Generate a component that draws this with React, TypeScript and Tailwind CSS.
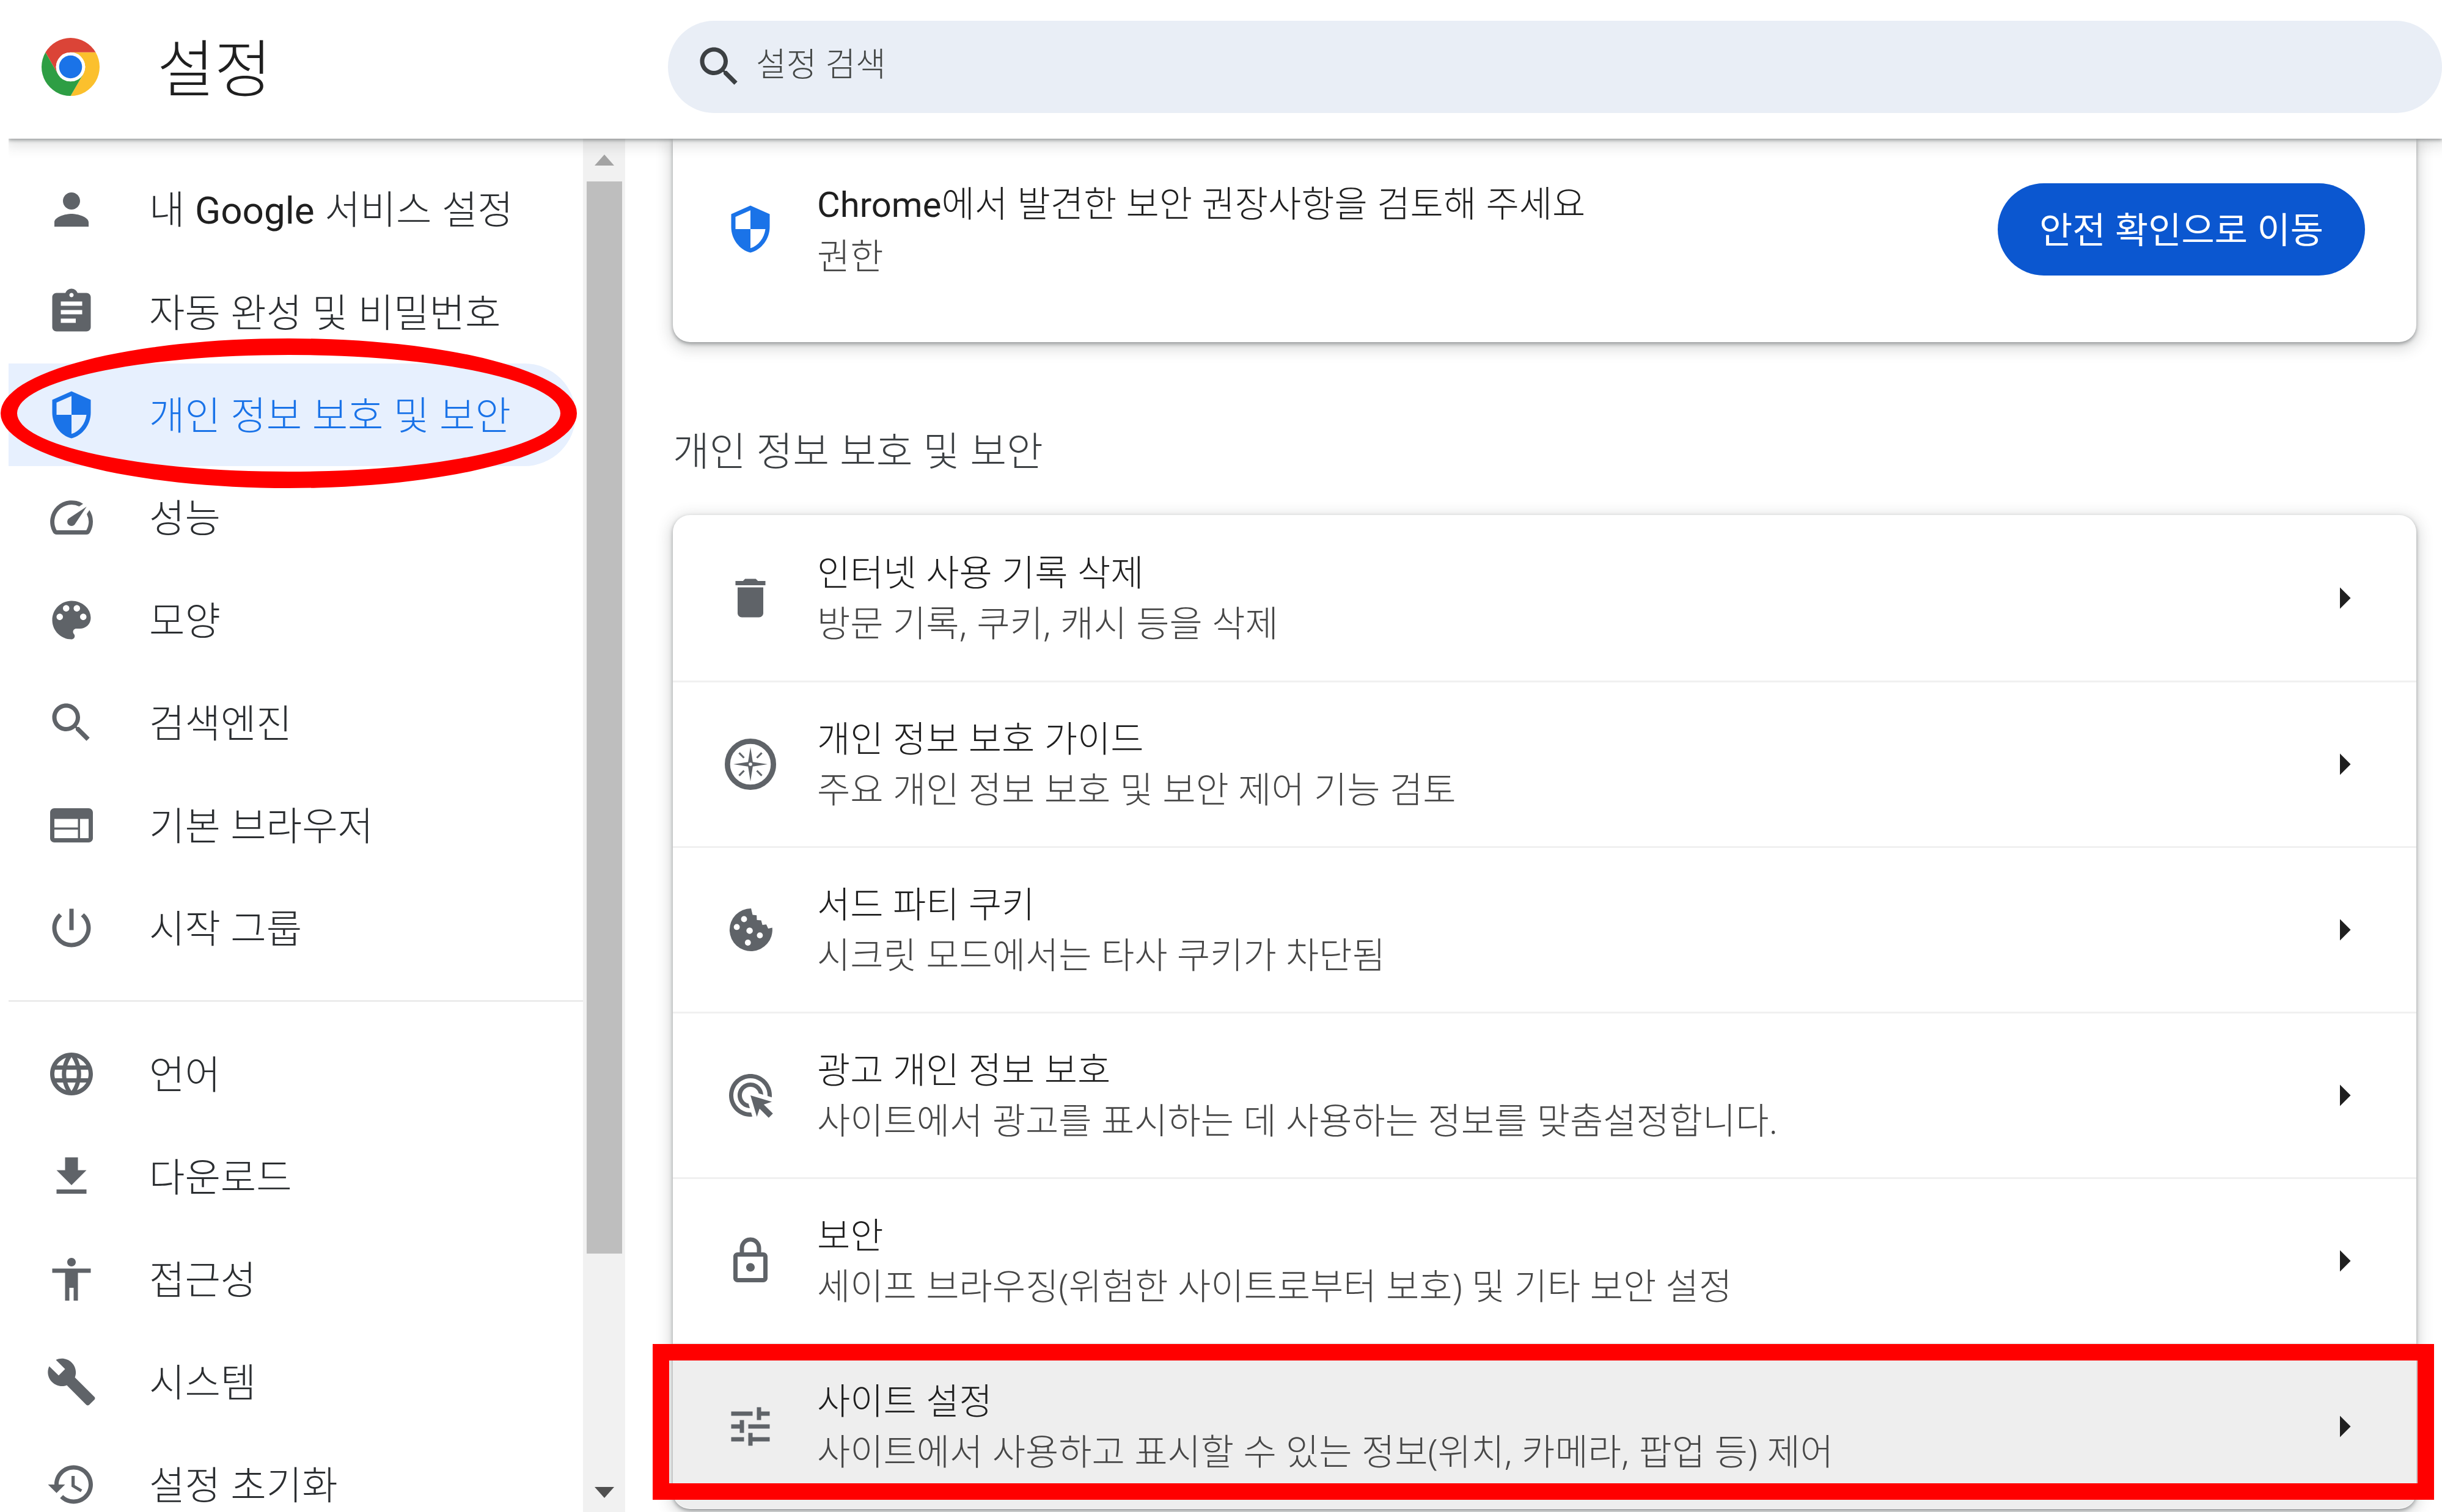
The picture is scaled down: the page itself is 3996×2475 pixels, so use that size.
import React from "react";

const P: Record<string, string> = {
  person: "M12 12c2.21 0 4-1.79 4-4s-1.79-4-4-4-4 1.79-4 4 1.79 4 4 4zm0 2c-2.67 0-8 1.34-8 4v2h16v-2c0-2.66-5.33-4-8-4z",
  assignment: "M19 3h-4.18C14.4 1.84 13.3 1 12 1c-1.3 0-2.4.84-2.82 2H5c-1.1 0-2 .9-2 2v14c0 1.1.9 2 2 2h14c1.1 0 2-.9 2-2V5c0-1.1-.9-2-2-2zm-7 0c.55 0 1 .45 1 1s-.45 1-1 1-1-.45-1-1 .45-1 1-1zm2 14H7v-2h7v2zm3-4H7v-2h10v2zm0-4H7V7h10v2z",
  security: "M12 1L3 5v6c0 5.55 3.84 10.74 9 12 5.16-1.26 9-6.45 9-12V5l-9-4zm0 10.99h7c-.53 4.12-3.28 7.79-7 8.94V12H5V6.3l7-3.11v8.8z",
  speed: "M20.38 8.57l-1.23 1.85a8 8 0 0 1-.22 7.58H5.07A8 8 0 0 1 15.58 6.85l1.85-1.23A10 10 0 0 0 3.35 19a2 2 0 0 0 1.72 1h13.85a2 2 0 0 0 1.74-1 10 10 0 0 0-.27-10.44zm-9.79 6.84a2 2 0 0 0 2.83 0l5.66-8.49-8.49 5.66a2 2 0 0 0 0 2.83z",
  palette: "M12 3c-4.97 0-9 4.03-9 9s4.03 9 9 9c.83 0 1.5-.67 1.5-1.5 0-.39-.15-.74-.39-1.01-.23-.26-.38-.61-.38-.99 0-.83.67-1.5 1.5-1.5H16c2.76 0 5-2.24 5-5 0-4.42-4.03-8-9-8zm-5.5 9c-.83 0-1.5-.67-1.5-1.5S5.67 9 6.5 9 8 9.67 8 10.5 7.33 12 6.5 12zm3-4C8.67 8 8 7.33 8 6.5S8.67 5 9.5 5s1.5.67 1.5 1.5S10.33 8 9.5 8zm5 0c-.83 0-1.5-.67-1.5-1.5S13.67 5 14.5 5s1.5.67 1.5 1.5S15.33 8 14.5 8zm3 4c-.83 0-1.5-.67-1.5-1.5S16.67 9 17.5 9s1.5.67 1.5 1.5-.67 1.5-1.5 1.5z",
  search: "M15.5 14h-.79l-.28-.27C15.41 12.59 16 11.11 16 9.5 16 5.91 13.09 3 9.5 3S3 5.91 3 9.5 5.91 16 9.5 16c1.61 0 3.09-.59 4.23-1.57l.27.28v.79l5 4.99L20.49 19l-4.99-5zm-6 0C7.01 14 5 11.99 5 9.5S7.01 5 9.5 5 14 7.01 14 9.5 11.99 14 9.5 14z",
  web: "M20 4H4c-1.1 0-1.99.9-1.99 2L2 18c0 1.1.9 2 2 2h16c1.1 0 2-.9 2-2V6c0-1.1-.9-2-2-2zm-5 14H4v-4h11v4zm0-5H4V9h11v4zm5 5h-4V9h4v9z",
  power: "M13 3h-2v10h2V3zm4.83 2.17l-1.42 1.42C17.99 7.86 19 9.81 19 12c0 3.87-3.13 7-7 7s-7-3.13-7-7c0-2.19 1.01-4.14 2.58-5.42L6.17 5.17C4.23 6.82 3 9.26 3 12c0 4.97 4.03 9 9 9s9-4.03 9-9c0-2.74-1.23-5.18-3.17-6.83z",
  language: "M11.99 2C6.47 2 2 6.48 2 12s4.47 10 9.99 10C17.52 22 22 17.52 22 12S17.52 2 11.99 2zm6.93 6h-2.95c-.32-1.25-.78-2.45-1.38-3.56 1.84.63 3.37 1.91 4.33 3.56zM12 4.04c.83 1.2 1.48 2.53 1.91 3.96h-3.82c.43-1.43 1.08-2.76 1.91-3.96zM4.26 14C4.1 13.36 4 12.69 4 12s.1-1.36.26-2h3.38c-.08.66-.14 1.32-.14 2 0 .68.06 1.34.14 2H4.26zm.82 2h2.95c.32 1.25.78 2.45 1.38 3.56-1.84-.63-3.37-1.9-4.33-3.56zm2.95-8H5.08c.96-1.66 2.49-2.93 4.33-3.56C8.81 5.55 8.35 6.75 8.03 8zM12 19.96c-.83-1.2-1.48-2.53-1.91-3.96h3.82c-.43 1.43-1.08 2.76-1.91 3.96zM14.34 14H9.66c-.09-.66-.16-1.32-.16-2 0-.68.07-1.35.16-2h4.68c.09.65.16 1.32.16 2 0 .68-.07 1.34-.16 2zm.25 5.56c.6-1.11 1.06-2.31 1.38-3.56h2.95c-.96 1.65-2.49 2.93-4.33 3.56zM16.36 14c.08-.66.14-1.32.14-2 0-.68-.06-1.34-.14-2h3.38c.16.64.26 1.31.26 2s-.1 1.36-.26 2h-3.38z",
  download: "M19 9h-4V3H9v6H5l7 7 7-7zM5 18v2h14v-2H5z",
  accessibility: "M12 2c1.1 0 2 .9 2 2s-.9 2-2 2-2-.9-2-2 .9-2 2-2zm9 7h-6v13h-2v-6h-2v6H9V9H3V7h18v2z",
  build: "M22.7 19l-9.1-9.1c.9-2.3.4-5-1.5-6.9-2-2-5-2.4-7.4-1.3L9 6 6 9 1.6 4.7C.4 7.1.9 10.1 2.9 12.1c1.9 1.9 4.6 2.4 6.9 1.5l9.1 9.1c.4.4 1 .4 1.4 0l2.3-2.3c.5-.4.5-1.1.1-1.4z",
  restore: "M13 3c-4.97 0-9 4.03-9 9H1l3.89 3.89.07.14L9 12H6c0-3.87 3.13-7 7-7s7 3.13 7 7-3.13 7-7 7c-1.93 0-3.68-.79-4.94-2.06l-1.42 1.42C8.27 19.99 10.51 21 13 21c4.97 0 9-4.03 9-9s-4.03-9-9-9zm-1 5v5l4.28 2.54.72-1.21-3.5-2.08V8H12z",
  delete: "M6 19c0 1.1.9 2 2 2h8c1.1 0 2-.9 2-2V7H6v12zM19 4h-3.5l-1-1h-5l-1 1H5v2h14V4z",
  ads: "M11.71 17.99C8.53 17.84 6 15.22 6 12c0-3.31 2.69-6 6-6 3.22 0 5.84 2.53 5.99 5.71l-2.1-.63C15.48 9.31 13.89 8 12 8c-2.21 0-4 1.79-4 4 0 1.89 1.31 3.48 3.08 3.89l.63 2.1zM22 12c0 .3-.01.6-.04.9l-1.97-.59c.01-.1.01-.21.01-.31 0-4.42-3.58-8-8-8s-8 3.58-8 8 3.58 8 8 8c.1 0 .21 0 .31-.01l.59 1.97c-.3.03-.6.04-.9.04-5.52 0-10-4.48-10-10S6.48 2 12 2s10 4.48 10 10zm-3.77 4.26L22 15l-10-3 3 10 1.26-3.77 4.27 4.27 1.98-1.98-4.28-4.26z",
  lock: "M18 8h-1V6c0-2.76-2.24-5-5-5S7 3.24 7 6v2H6c-1.1 0-2 .9-2 2v10c0 1.1.9 2 2 2h12c1.1 0 2-.9 2-2V10c0-1.1-.9-2-2-2zM9 6c0-1.66 1.34-3 3-3s3 1.34 3 3v2H9V6zm9 14H6V10h12v10zm-6-3c1.1 0 2-.9 2-2s-.9-2-2-2-2 .9-2 2 .9 2 2 2z",
  tune: "M3 17v2h6v-2H3zM3 5v2h10V5H3zm10 16v-2h8v-2h-8v-2h-2v6h2zM7 9v2H3v2h4v2h2V9H7zm14 4v-2H11v2h10zm-6-4h2V7h4V5h-4V3h-2v6z",
  arrow: "M10 17l5-5-5-5v10z",
};

function Icon({ name, className }: { name: string; className: string }) {
  return (
    <svg viewBox="0 0 24 24" className={`w-[84px] h-[84px] shrink-0 fill-current ${className}`}>
      {name === "compass" ? (
        <>
          <circle cx="12" cy="12" r="10.75" fill="none" stroke="currentColor" strokeWidth="2.5" />
          <path d="M12 4 13.1 10.9 20 12 13.1 13.1 12 20 10.9 13.1 4 12 10.9 10.9Z" />
          <circle cx="12" cy="12" r="0.8" fill="#fff" />
          <path d="M6.7 6.7 9 9M17.3 6.7 15 9M6.7 17.3 9 15M17.3 17.3 15 15" fill="none" stroke="currentColor" strokeWidth="0.9" />
        </>
      ) : name === "cookie" ? (
        <>
          <path d="M12.3 2 A10 10 0 1 0 22.2 11 L20.3 11.4 L19.4 9.5 L17.6 9.7 L17 7.6 L15 7.4 L14.9 5.2 L13 5 Z" />
          <circle cx="9" cy="7" r="1.4" fill="#fff" />
          <circle cx="5.6" cy="10.7" r="1.4" fill="#fff" />
          <circle cx="11.6" cy="12.4" r="1.5" fill="#fff" />
          <circle cx="16.4" cy="14.6" r="1.4" fill="#fff" />
          <circle cx="10.8" cy="18" r="1.4" fill="#fff" />
        </>
      ) : (
        <path d={P[name]} />
      )}
    </svg>
  );
}

function ChromeLogo() {
  return (
    <svg viewBox="0 0 48 48" className="w-[95px] h-[95px] shrink-0">
      <path fill="#db4437" d="M3.22 12A24 24 0 0 1 44.78 12H24A12 12 0 0 0 13.6 30Z" />
      <path fill="#fbc02d" d="M44.78 12A24 24 0 0 1 24 48L34.4 30A12 12 0 0 0 24 12Z" />
      <path fill="#2e9e44" d="M24 48A24 24 0 0 1 3.22 12L13.6 30A12 12 0 0 0 34.4 30Z" />
      <circle cx="24" cy="24" r="12" fill="#fff" />
      <circle cx="24" cy="24" r="9.5" fill="#1a73e8" />
    </svg>
  );
}

const navTop = [
  { i: "person", t: <>내 <span className="text-[62px] font-normal text-[#1f1f1f] [font-family:Roboto,sans-serif]">Google</span> 서비스 설정</> },
  { i: "assignment", t: "자동 완성 및 비밀번호" },
  { i: "security", t: "개인 정보 보호 및 보안", active: true },
  { i: "speed", t: "성능" },
  { i: "palette", t: "모양" },
  { i: "search", t: "검색엔진" },
  { i: "web", t: "기본 브라우저" },
  { i: "power", t: "시작 그룹" },
];
const navBottom = [
  { i: "language", t: "언어" },
  { i: "download", t: "다운로드" },
  { i: "accessibility", t: "접근성" },
  { i: "build", t: "시스템" },
  { i: "restore", t: "설정 초기화" },
];

function NavRow({ i, t, active }: { i: string; t: React.ReactNode; active?: boolean }) {
  return (
    <div className={`h-[168px] shrink-0 w-[928px] flex items-center pl-[61px] gap-[85px] rounded-r-full ${active ? "bg-[#e7f0fe]" : ""}`}>
      <Icon name={i} className={active ? "text-[#1a73e8]" : "text-[#5f6368]"} />
      <span className={`text-[63.5px] font-light leading-none whitespace-nowrap ${active ? "text-[#1a73e8]" : "text-[#2b2e31]"}`}>{t}</span>
    </div>
  );
}

const rows = [
  { i: "delete", t: "인터넷 사용 기록 삭제", s: "방문 기록, 쿠키, 캐시 등을 삭제" },
  { i: "compass", t: "개인 정보 보호 가이드", s: "주요 개인 정보 보호 및 보안 제어 기능 검토" },
  { i: "cookie", t: "서드 파티 쿠키", s: "시크릿 모드에서는 타사 쿠키가 차단됨" },
  { i: "ads", t: "광고 개인 정보 보호", s: "사이트에서 광고를 표시하는 데 사용하는 정보를 맞춤설정합니다." },
  { i: "lock", t: "보안", s: "세이프 브라우징(위험한 사이트로부터 보호) 및 기타 보안 설정" },
  { i: "tune", t: "사이트 설정", s: "사이트에서 사용하고 표시할 수 있는 정보(위치, 카메라, 팝업 등) 제어", hi: true },
];

const cardShadow = "shadow-[0_3px_6px_rgba(60,64,67,0.45),0_6px_22px_6px_rgba(60,64,67,0.18)]";

export default function App() {
  return (
    <div className="relative w-[3996px] h-[2475px] bg-white pl-[14px] overflow-hidden [font-family:'Noto_Sans','Noto_Sans_CJK_KR',sans-serif]">
      <div className="w-full h-full overflow-hidden flex flex-col">
        <header className="relative z-10 h-[227px] shrink-0 bg-white flex items-center pb-[9px] shadow-[0_3px_5px_rgba(60,64,67,0.4),0_8px_20px_4px_rgba(60,64,67,0.15)]">
          <div className="w-[1079px] shrink-0 pl-[54px] flex items-center gap-[94px]">
            <ChromeLogo />
            <span className="text-[102px] font-light leading-none text-[#1f1f1f] whitespace-nowrap translate-y-[2px]">설정</span>
          </div>
          <div className="flex-1 h-[151px] rounded-full bg-[#e9eef6] flex items-center pl-[42px] gap-[18px]">
            <Icon name="search" className="text-[#3c4043]" />
            <span className="text-[54px] font-light leading-none text-[#444746] whitespace-nowrap -translate-y-[5px]">설정 검색</span>
          </div>
        </header>

        <div className="flex-1 min-h-0 flex">
          <aside className="w-[940px] shrink-0 pt-[32px] flex flex-col overflow-hidden">
            {navTop.map((n, k) => (
              <NavRow key={k} {...n} />
            ))}
            <div className="h-[3px] shrink-0 my-[34px] bg-[#ececec]" />
            {navBottom.map((n, k) => (
              <NavRow key={k} {...n} />
            ))}
          </aside>

          <div className="w-[69px] shrink-0 bg-[#f1f1f1] flex flex-col items-center">
            <div className="h-[70px] shrink-0 flex items-center justify-center">
              <svg viewBox="0 0 32 18" className="w-[32px] h-[18px] fill-[#a3a3a3]"><path d="M16 0 32 18H0Z" /></svg>
            </div>
            <div className="w-[58px] h-[1755px] shrink-0 bg-[#bebebe]" />
            <div className="flex-1 flex items-end justify-center pb-[23px]">
              <svg viewBox="0 0 32 18" className="w-[32px] h-[18px] fill-[#505050]"><path d="M0 0H32L16 18Z" /></svg>
            </div>
          </div>

          <main className="flex-1 min-w-0 overflow-hidden pl-[78px] pr-[42px]">
            <section className={`h-[333px] bg-white rounded-b-[28px] flex items-center pb-[37px] pl-[85px] pr-[84px] ${cardShadow}`}>
              <Icon name="security" className="text-[#1a73e8]" />
              <div className="ml-[67px] flex-1 min-w-0 text-[59px] font-light leading-[83px] whitespace-nowrap">
                <div className="text-[#1f1f1f]"><span className="text-[58px] font-normal [font-family:Roboto,sans-serif]">Chrome</span>에서 발견한 보안 권장사항을 검토해 주세요</div>
                <div className="text-[#474747]">권한</div>
              </div>
              <div className="w-[601px] h-[151px] rounded-full bg-[#0b57d0] text-white text-[59px] leading-none flex items-center justify-center whitespace-nowrap">안전 확인으로 이동</div>
            </section>

            <h2 className="h-[283px] pt-[72px] flex items-center text-[65px] font-light leading-none text-[#3c4043] whitespace-nowrap">개인 정보 보호 및 보안</h2>

            <section className={`h-[1627px] bg-white rounded-[28px] flex flex-col ${cardShadow}`}>
              {rows.map((r, k) => (
                <div key={k} className={`h-[271px] shrink-0 flex items-center pl-[85px] pr-[76px] ${k > 0 ? "border-t-[3px] border-[#f0f0f0]" : ""} ${r.hi ? "bg-[#eeeeee] rounded-b-[28px]" : ""}`}>
                  <Icon name={r.i} className="text-[#5f6368]" />
                  <div className="ml-[67px] flex-1 min-w-0 text-[59px] font-light leading-[83px] whitespace-nowrap -translate-y-[1px]">
                    <div className="text-[#1f1f1f]">{r.t}</div>
                    <div className="text-[#474747]">{r.s}</div>
                  </div>
                  <Icon name="arrow" className="text-[#1f1f1f]" />
                </div>
              ))}
            </section>
          </main>
        </div>
      </div>

      <div className="absolute left-[1px] top-[554px] w-[943px] h-[245px] rounded-[50%] border-[27px] border-[#ff0000] pointer-events-none" />
      <div className="absolute left-[1068px] top-[2200px] w-[2915px] h-[255px] border-[27px] border-[#ff0000] pointer-events-none" />
    </div>
  );
}
